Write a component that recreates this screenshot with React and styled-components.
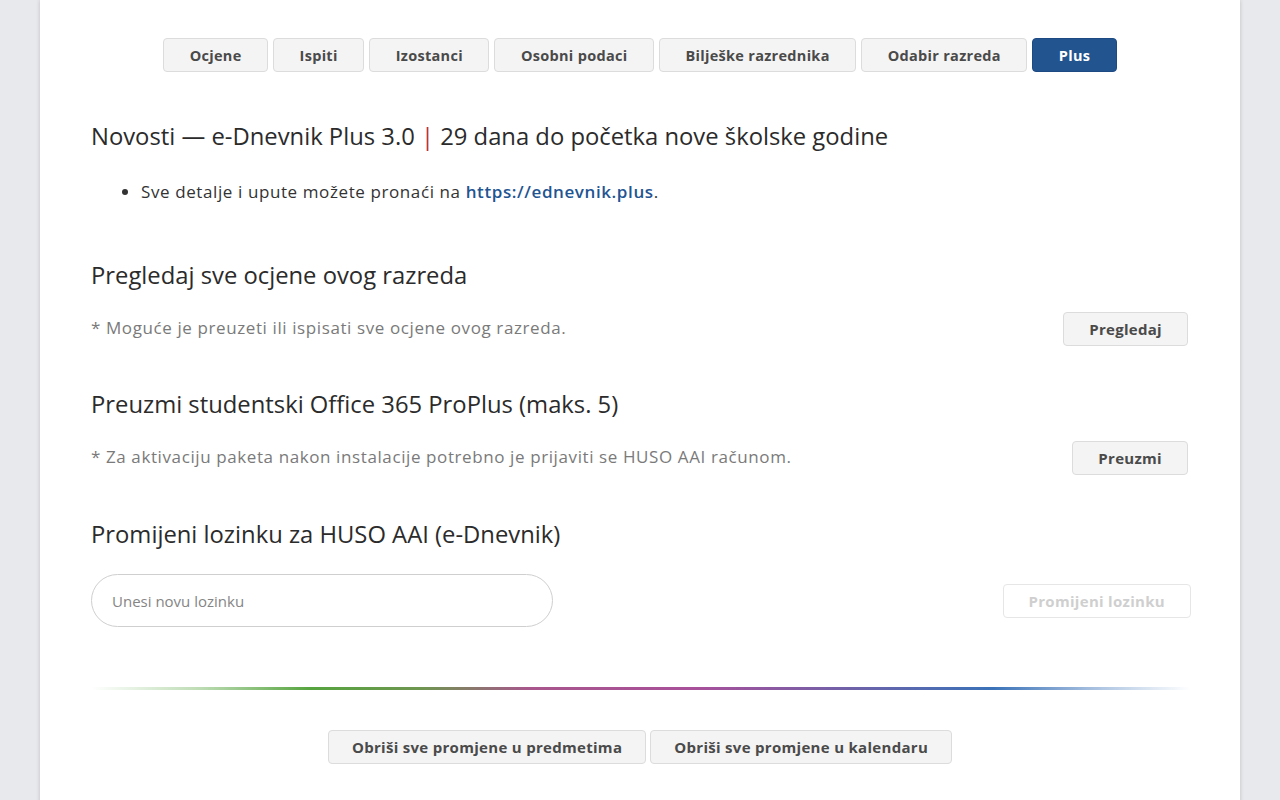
import React from "react";
import styled, { createGlobalStyle } from "styled-components";

const GlobalStyle = createGlobalStyle`
  html, body {
    margin: 0;
    padding: 0;
    background: #e8e9ec;
    font-family: "Open Sans", "DejaVu Sans", sans-serif;
    color: #333;
  }
  * { box-sizing: border-box; }
`;

const tabs = [
  "Ocjene",
  "Ispiti",
  "Izostanci",
  "Osobni podaci",
  "Bilješke razrednika",
  "Odabir razreda",
  "Plus",
];

const App = () => {
  return (
    <>
      <GlobalStyle />
      <Page>
        <Container>
          <TabBar>
            {tabs.map((t) => (
              <Tab key={t} $active={t === "Plus"}>
                {t}
              </Tab>
            ))}
          </TabBar>

          <Heading $mt={50}>
            Novosti — e-Dnevnik Plus 3.0 <Sep>|</Sep> 29 dana do početka nove
            školske godine
          </Heading>
          <List>
            <li>
              Sve detalje i upute možete pronaći na{" "}
              <Link href="#">https://ednevnik.plus</Link>.
            </li>
          </List>

          <Heading $mt={57}>Pregledaj sve ocjene ovog razreda</Heading>
          <Row>
            <Note>* Moguće je preuzeti ili ispisati sve ocjene ovog razreda.</Note>
            <Button>Pregledaj</Button>
          </Row>

          <Heading $mt={44}>Preuzmi studentski Office 365 ProPlus (maks. 5)</Heading>
          <Row>
            <Note>
              * Za aktivaciju paketa nakon instalacije potrebno je prijaviti se
              HUSO AAI računom.
            </Note>
            <Button>Preuzmi</Button>
          </Row>

          <Heading $mt={45}>Promijeni lozinku za HUSO AAI (e-Dnevnik)</Heading>
          <InputRow>
            <Input type="password" placeholder="Unesi novu lozinku" />
            <Button disabled>Promijeni lozinku</Button>
          </InputRow>

          <Divider />

          <Footer>
            <Button $pad={23}>Obriši sve promjene u predmetima</Button>
            <Button $pad={23}>Obriši sve promjene u kalendaru</Button>
          </Footer>
        </Container>
      </Page>
    </>
  );
};

export default App;

const Page = styled.div`
  min-height: 800px;
  display: flex;
  justify-content: center;
`;

const Container = styled.div`
  width: 1200px;
  min-height: 800px;
  background: #fff;
  box-shadow: 0 0 4px rgba(0, 0, 0, 0.18);
  padding: 38px 50px 40px 51px;
`;

const TabBar = styled.div`
  display: flex;
  justify-content: center;
  gap: 5px;
  margin-left: -1px;
`;

const Tab = styled.button`
  height: 34px;
  padding: 0 25.5px;
  border-radius: 4px;
  font-family: inherit;
  font-size: 14.5px;
  font-weight: 700;
  letter-spacing: 0.3px;
  cursor: pointer;
  border: 1px solid ${(p) => (p.$active ? "#1d4a82" : "#dcdcdc")};
  background: ${(p) => (p.$active ? "#22548f" : "#f4f4f4")};
  color: ${(p) => (p.$active ? "#fff" : "#4a4a4a")};
`;

const Heading = styled.h2`
  margin: ${(p) => p.$mt}px 0 0;
  font-size: 23.8px;
  font-weight: 400;
  line-height: 29px;
  color: #2b2b2b;
`;

const Sep = styled.span`
  color: #b8303f;
`;

const List = styled.ul`
  margin: 29px 0 0;
  padding-left: 50px;
  font-size: 17px;
  letter-spacing: 0.6px;
  line-height: 24px;
  color: #333;
`;

const Link = styled.a`
  color: #1f5592;
  font-weight: 600;
  text-decoration: none;
`;

const Row = styled.div`
  display: flex;
  align-items: center;
  justify-content: space-between;
  margin-top: 22px;
  padding-right: 2px;
`;

const Note = styled.span`
  font-size: 17px;
  letter-spacing: 0.6px;
  color: #7a7a7a;
  margin-top: -4px;
`;

const Button = styled.button`
  height: 34px;
  padding: 0 ${(p) => p.$pad ?? 25}px;
  border-radius: 4px;
  border: 1px solid #dcdcdc;
  background: #f4f4f4;
  color: #4a4a4a;
  font-family: inherit;
  font-size: 15px;
  font-weight: 700;
  letter-spacing: 0.3px;
  cursor: pointer;
  &:disabled {
    background: #fff;
    border-color: #e6e6e6;
    color: #cfcfcf;
    cursor: default;
  }
`;

const InputRow = styled.div`
  display: flex;
  align-items: center;
  justify-content: space-between;
  margin-top: 25px;
  margin-right: -1px;
`;

const Input = styled.input`
  width: 462px;
  height: 53px;
  border: 1px solid #cfcfcf;
  border-radius: 27px;
  padding: 0 20px;
  font-family: inherit;
  font-size: 15px;
  color: #333;
  outline: none;
  &::placeholder {
    color: #858585;
  }
`;

const Divider = styled.div`
  height: 3px;
  margin: 60px 0 0;
  background: linear-gradient(
    to right,
    rgba(90, 167, 68, 0) 0%,
    rgba(90, 167, 68, 0.4) 10%,
    #56a43f 20%,
    #6e9650 30%,
    #a8568c 40%,
    #a8509a 55%,
    #6b63aa 70%,
    #3a72b8 82%,
    rgba(58, 114, 184, 0.4) 92%,
    rgba(58, 114, 184, 0) 100%
  );
`;

const Footer = styled.div`
  display: flex;
  justify-content: center;
  gap: 4px;
  margin-top: 40px;
  margin-left: -1px;
`;
